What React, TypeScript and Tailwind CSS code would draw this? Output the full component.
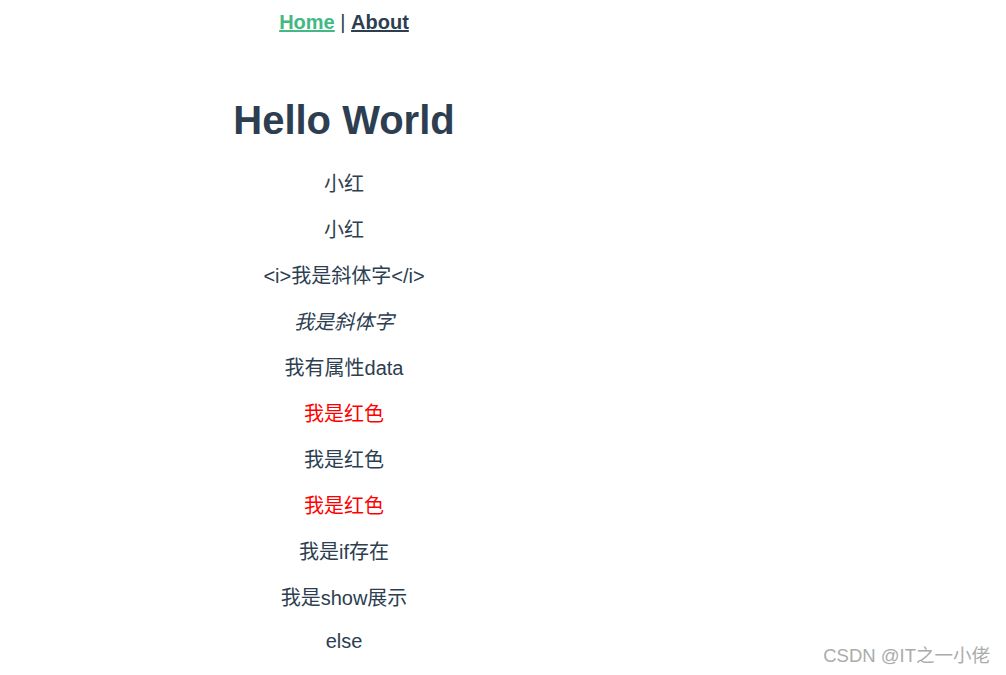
import React from 'react';

const rows = [
  { text: '小红' },
  { text: '小红' },
  { text: '<i>我是斜体字</i>' },
  { text: '我是斜体字', italic: true },
  { text: '我有属性data' },
  { text: '我是红色', red: true },
  { text: '我是红色' },
  { text: '我是红色', red: true },
  { text: '我是if存在' },
  { text: '我是show展示' },
];

export default function App() {
  return (
    <div
      className="relative w-full h-[675px] overflow-hidden bg-white text-[#2c3e50]"
      style={{ fontFamily: '"Liberation Sans", Arial, "Noto Sans CJK SC", sans-serif' }}
    >
      <div className="w-[688px] text-center">
        {/* Nav */}
        <nav className="pt-[11px] text-[20px] leading-[23px]">
          <a className="font-bold underline text-[#42b983]">Home</a>
          <span> | </span>
          <a className="font-bold underline text-[#2c3e50]">About</a>
        </nav>

        <h1 className="mt-[63px] text-[40px] leading-[46px] font-bold">Hello World</h1>

        <div className="mt-[28px] flex flex-col gap-[20px] text-[20px] leading-[26px]">
          {rows.map((r, i) => (
            <p
              key={i}
              className={`${r.italic ? 'italic' : ''} ${r.red ? 'text-[#ff0000]' : ''}`}
            >
              {r.text}
            </p>
          ))}
        </div>
        <div className="mt-[17px] text-[20px] leading-[26px]">else</div>
      </div>

      {/* watermark */}
      <div className="absolute right-[16px] bottom-[8px] text-[18.5px] leading-[22px] text-[#ababab]">
        CSDN @IT之一小佬
      </div>
    </div>
  );
}
